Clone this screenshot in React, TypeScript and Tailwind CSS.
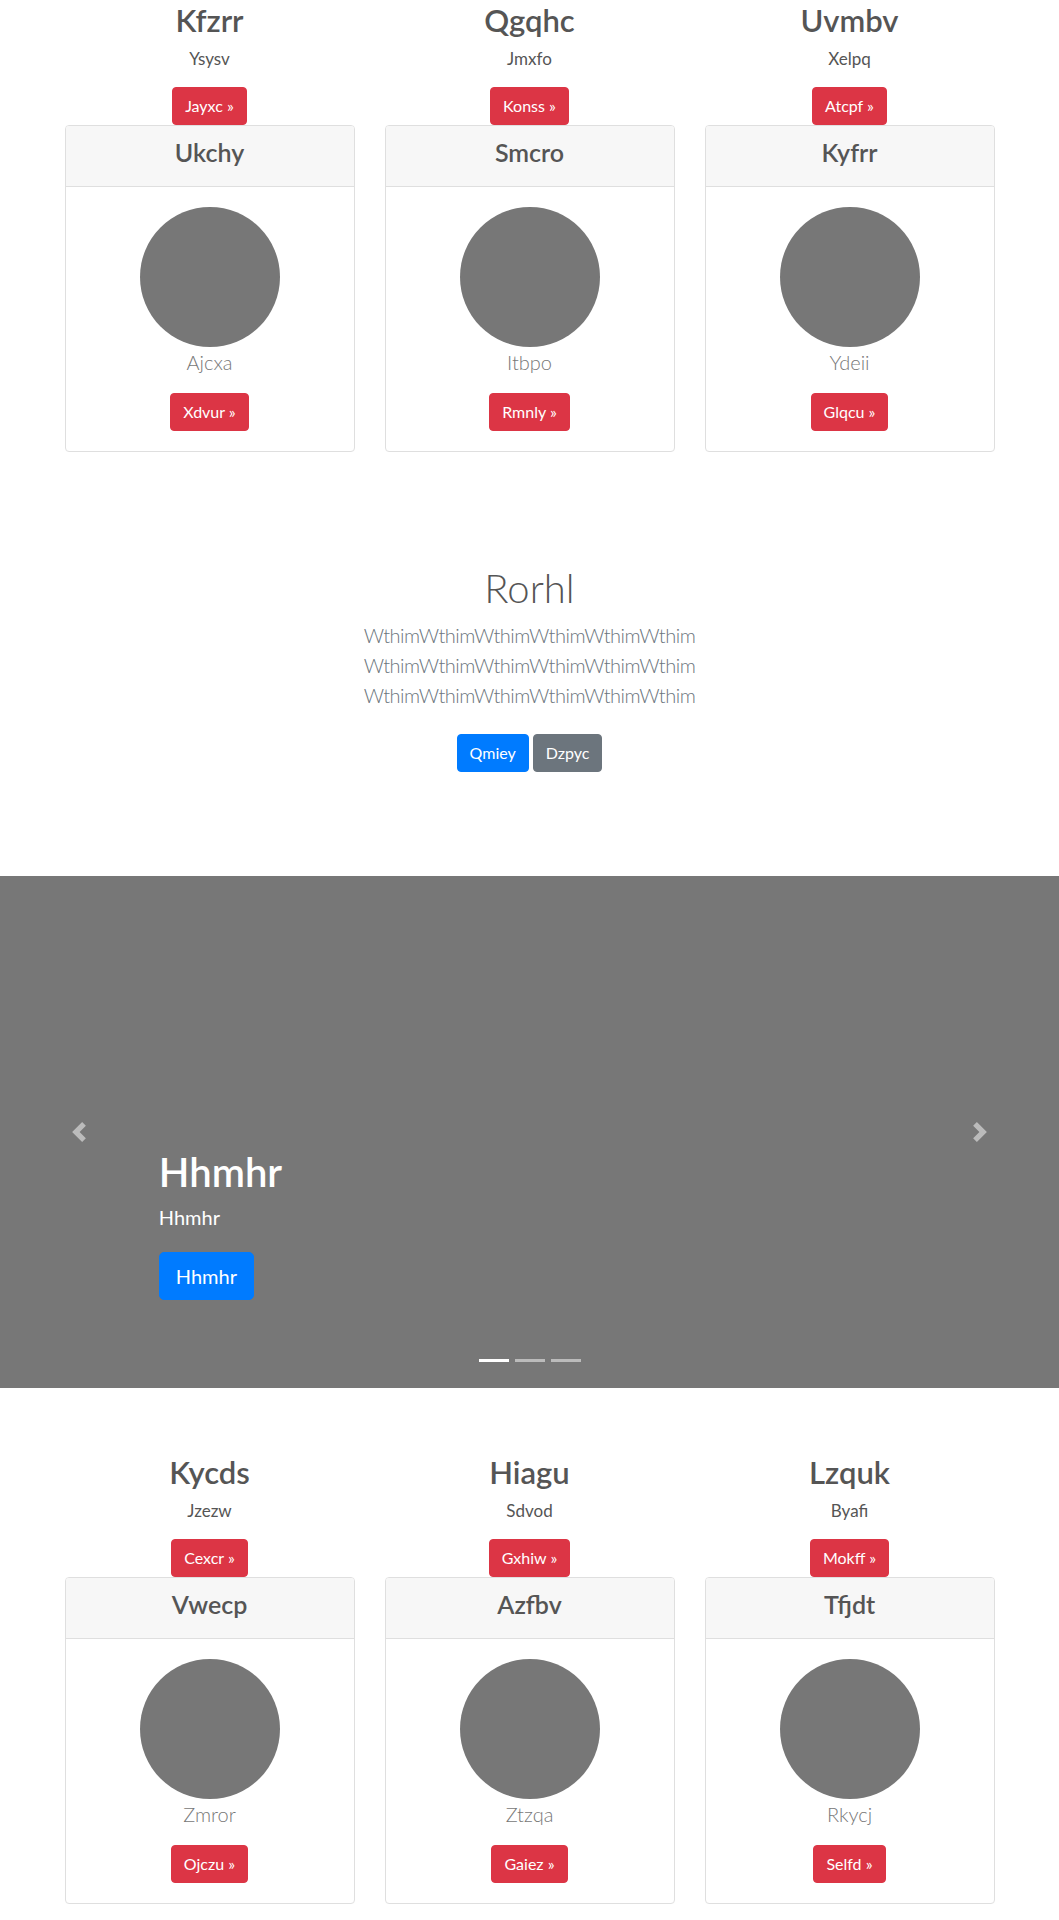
import React from 'react';

type Item = {
  title: string;
  sub: string;
  action: string;
  card: string;
  name: string;
  cta: string;
};

const topItems: Item[] = [
  { title: 'Kfzrr', sub: 'Ysysv', action: 'Jayxc', card: 'Ukchy', name: 'Ajcxa', cta: 'Xdvur' },
  { title: 'Qgqhc', sub: 'Jmxfo', action: 'Konss', card: 'Smcro', name: 'Itbpo', cta: 'Rmnly' },
  { title: 'Uvmbv', sub: 'Xelpq', action: 'Atcpf', card: 'Kyfrr', name: 'Ydeii', cta: 'Glqcu' },
];

const bottomItems: Item[] = [
  { title: 'Kycds', sub: 'Jzezw', action: 'Cexcr', card: 'Vwecp', name: 'Zmror', cta: 'Ojczu' },
  { title: 'Hiagu', sub: 'Sdvod', action: 'Gxhiw', card: 'Azfbv', name: 'Ztzqa', cta: 'Gaiez' },
  { title: 'Lzquk', sub: 'Byafi', action: 'Mokff', card: 'Tfjdt', name: 'Rkycj', cta: 'Selfd' },
];

const dangerBtn =
  'inline-block rounded-[4px] border border-[#dc3545] bg-[#dc3545] px-3 py-[6px] text-[16px] leading-6 text-white';

function Column({ item }: { item: Item }) {
  return (
    <div className="flex flex-col items-center px-[15px]">
      <h2 className="text-[31px] leading-[41px] font-semibold text-[#555]">{item.title}</h2>
      <p className="mt-[6px] text-[17px] leading-6 text-[#555]">{item.sub}</p>
      <button className={`${dangerBtn} mt-4`}>{item.action} &raquo;</button>

      {/* card */}
      <div className="w-full overflow-hidden rounded-[4px] border border-[#dfdfdf]">
        <div className="h-[61px] border-b border-[#dfdfdf] bg-[#f7f7f7] pt-[10px] text-center">
          <h3 className="text-[25px] leading-[32px] font-semibold text-[#555]">{item.card}</h3>
        </div>
        <div className="flex flex-col items-center p-5">
          <div className="h-[140px] w-[140px] rounded-full bg-[#777]" />
          <p className="text-[20px] leading-[30px] font-light text-[#777]">{item.name}</p>
          <button className={`${dangerBtn} mt-4`}>{item.cta} &raquo;</button>
        </div>
      </div>
    </div>
  );
}

function CardRow({ items }: { items: Item[] }) {
  return (
    <div className="mx-auto grid w-[960px] grid-cols-3">
      {items.map((it) => (
        <Column key={it.title} item={it} />
      ))}
    </div>
  );
}

function Chevron({ dir }: { dir: 'prev' | 'next' }) {
  return (
    <svg width="20" height="20" viewBox="0 0 8 8" fill="#fff" className="opacity-50">
      {dir === 'prev' ? (
        <path d="M5.25 0l-4 4 4 4 1.5-1.5L4.25 4l2.5-2.5L5.25 0z" />
      ) : (
        <path d="M2.75 0l-1.5 1.5L3.75 4l-2.5 2.5L2.75 8l4-4-4-4z" />
      )}
    </svg>
  );
}

export default function App() {
  const line = 'WthimWthimWthimWthimWthimWthim';
  return (
    <div className="min-h-[1920px] bg-white font-['Lato',sans-serif]">
      {/* ── Top cards ── */}
      <CardRow items={topItems} />

      {/* ── Jumbotron ── */}
      <section className="flex flex-col items-center pt-[112px] pb-[104px] text-center">
        <h1 className="text-[40px] leading-[48px] font-light text-[#555]">Rorhl</h1>
        <p className="mt-2 text-[20px] leading-[30px] font-light tracking-[-0.5px] text-[#6c757d]">
          <span className="block">{line}</span>
          <span className="block">{line}</span>
          <span className="block">{line}</span>
        </p>
        <div className="mt-6 flex gap-1">
          <button className="rounded-[4px] border border-[#007bff] bg-[#007bff] px-3 py-[6px] text-[16px] leading-6 text-white">
            Qmiey
          </button>
          <button className="rounded-[4px] border border-[#6c757d] bg-[#6c757d] px-3 py-[6px] text-[16px] leading-6 text-white">
            Dzpyc
          </button>
        </div>
      </section>

      {/* ── Carousel ── */}
      <section className="relative h-[512px] bg-[#777]">
        <div className="flex h-full flex-col items-start justify-end px-[15%] pb-[88px]">
          <h1 className="text-[40px] leading-[48px] font-semibold text-white">Hhmhr</h1>
          <p className="mt-[6px] text-[20px] leading-[30px] text-white">Hhmhr</p>
          <button className="mt-5 rounded-[5px] border border-[#007bff] bg-[#007bff] px-4 py-2 text-[20px] leading-[30px] text-white">
            Hhmhr
          </button>
        </div>

        <div className="absolute left-0 top-0 flex h-full w-[15%] items-center justify-center">
          <Chevron dir="prev" />
        </div>
        <div className="absolute right-0 top-0 flex h-full w-[15%] items-center justify-center">
          <Chevron dir="next" />
        </div>

        <div className="absolute inset-x-0 bottom-[26px] flex justify-center gap-[6px]">
          <span className="h-[3px] w-[30px] bg-white" />
          <span className="h-[3px] w-[30px] bg-white/50" />
          <span className="h-[3px] w-[30px] bg-white/50" />
        </div>
      </section>

      {/* ── Bottom cards ── */}
      <div className="pt-16">
        <CardRow items={bottomItems} />
      </div>
    </div>
  );
}
